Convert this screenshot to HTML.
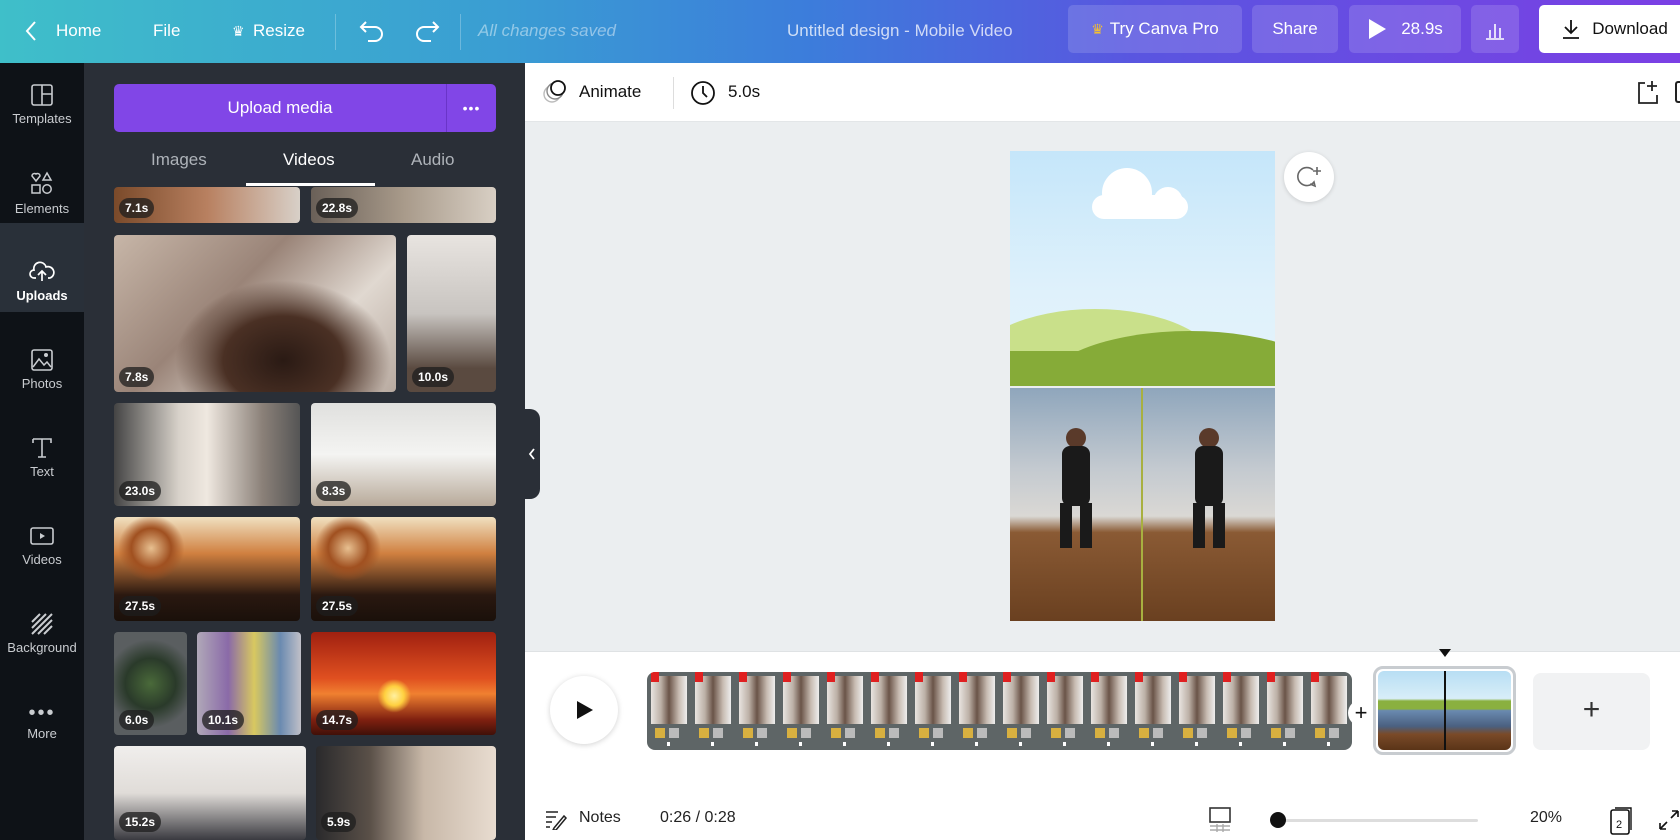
<!DOCTYPE html>
<html><head><meta charset="utf-8"><style>
*{margin:0;padding:0;box-sizing:border-box}
body{width:1680px;height:840px;overflow:hidden;font-family:"Liberation Sans",sans-serif;background:#ebeef0;position:relative}
.a{position:absolute}
#hdr{left:0;top:0;width:1680px;height:63px;background:linear-gradient(90deg,#3fbfc9 0%,#3a9dd3 30%,#3c7ddb 48%,#5a55e0 68%,#7b3fe4 100%);color:#fff;font-size:17px}
#hdr .t{position:absolute;top:20px;line-height:22px}
.hb{position:absolute;top:5px;height:48px;border-radius:5px;background:rgba(255,255,255,.14);color:#fff;font-size:17px;display:flex;align-items:center;justify-content:center}
#side{left:0;top:63px;width:84px;height:777px;background:#0e1217}
.si{position:absolute;left:0;width:84px;text-align:center;color:#c9ccd0;font-size:13px}
.si svg{display:block;margin:0 auto 4px}
#panel{left:84px;top:63px;width:441px;height:777px;background:#2a2f37}
.tile{position:absolute;border-radius:4px;overflow:hidden}
.lab{position:absolute;left:5px;bottom:5px;background:rgba(30,30,30,.75);color:#fff;font-size:12px;font-weight:bold;padding:3px 6px;border-radius:10px}
#tool{left:525px;top:63px;width:1155px;height:59px;background:#fff;border-bottom:1px solid #e3e6e8}
#tl{left:525px;top:651px;width:1155px;height:147px;background:#fff;border-top:1px solid #dfe2e4}
#bb{left:525px;top:798px;width:1155px;height:42px;background:#fff;font-size:16px;color:#222}
</style></head><body>
<div id="hdr" class="a">
<svg class="a" style="left:24px;top:20px" width="14" height="22" viewBox="0 0 14 22"><path d="M11 2 L3 11 L11 20" stroke="#fff" stroke-width="2" fill="none"/></svg>
<span class="t" style="left:56px">Home</span>
<span class="t" style="left:153px">File</span>
<span class="t" style="left:232px;font-size:14px">♛</span>
<span class="t" style="left:253px">Resize</span>
<div class="a" style="left:335px;top:14px;width:1px;height:36px;background:rgba(255,255,255,.25)"></div>
<svg class="a" style="left:358px;top:18px" width="28" height="26" viewBox="0 0 28 26"><path d="M8 4 L3 9 L8 14 M3 9 H17 A7 7 0 0 1 17 23 H10" stroke="#fff" stroke-width="2" fill="none"/></svg>
<svg class="a" style="left:413px;top:18px" width="28" height="26" viewBox="0 0 28 26"><path d="M20 4 L25 9 L20 14 M25 9 H11 A7 7 0 0 0 11 23 H18" stroke="#fff" stroke-width="2" fill="none"/></svg>
<div class="a" style="left:460px;top:14px;width:1px;height:36px;background:rgba(255,255,255,.25)"></div>
<span class="t" style="left:478px;font-style:italic;color:rgba(255,255,255,.45)">All changes saved</span>
<span class="t" style="left:787px;color:rgba(255,255,255,.75)">Untitled design - Mobile Video</span>
<div class="hb" style="left:1068px;width:174px"><span style="color:#f5c030;font-size:14px;margin-right:6px">♛</span>Try Canva Pro</div>
<div class="hb" style="left:1252px;width:86px">Share</div>
<div class="hb" style="left:1349px;width:112px"><svg width="20" height="22" style="margin-right:14px"><path d="M2 1 L19 11 L2 21Z" fill="#fff"/></svg>28.9s</div>
<div class="hb" style="left:1471px;width:48px"><svg width="22" height="22"><path d="M2 21H20M6 20V12M11 20V6M16 20V10" stroke="#fff" stroke-width="1.6"/></svg></div>
<div class="hb" style="left:1539px;width:150px;background:#fff;color:#111"><svg width="22" height="22" style="margin-right:10px"><path d="M11 2V15M5 9L11 15L17 9M3 20H19" stroke="#111" stroke-width="1.8" fill="none"/></svg>Download</div>
</div>

<div id="side" class="a">
<div class="a" style="left:0;top:160px;width:84px;height:89px;background:#293039"></div>
<div class="a" style="left:0;top:0;width:84px;height:160px;background:#0e1217;border-bottom-right-radius:8px"></div>
<div class="a" style="left:0;top:249px;width:84px;height:528px;background:#0e1217;border-top-right-radius:8px"></div>
<div class="si" style="top:20px"><svg width="24" height="24"><rect x="2" y="2" width="20" height="20" rx="2" stroke="#c9ccd0" stroke-width="1.6" fill="none"/><path d="M12 2V22M12 11H22" stroke="#c9ccd0" stroke-width="1.6"/></svg>Templates</div>
<div class="si" style="top:108px"><svg width="24" height="26"><path d="M6 10 L2 5 A2.5 2.5 0 0 1 6 3 A2.5 2.5 0 0 1 10 5Z M17 2 L21 9 H13Z" stroke="#c9ccd0" stroke-width="1.5" fill="none"/><rect x="2" y="14" width="8" height="8" stroke="#c9ccd0" stroke-width="1.5" fill="none"/><circle cx="17" cy="18" r="4.2" stroke="#c9ccd0" stroke-width="1.5" fill="none"/></svg>Elements</div>
<div class="si" style="top:197px;color:#fff;font-weight:bold"><svg width="26" height="24"><path d="M7 18 H5 A4 4 0 0 1 5 10 A6 6 0 0 1 17 7 A5 5 0 0 1 21 18 H19 M13 21V11M9 15L13 11L17 15" stroke="#fff" stroke-width="1.7" fill="none"/></svg>Uploads</div>
<div class="si" style="top:285px"><svg width="24" height="24"><rect x="2" y="2" width="20" height="20" rx="2" stroke="#c9ccd0" stroke-width="1.6" fill="none"/><path d="M3 19L9 11L14 17L17 14L21 19" stroke="#c9ccd0" stroke-width="1.5" fill="none"/><circle cx="16" cy="7" r="2" fill="#c9ccd0"/></svg>Photos</div>
<div class="si" style="top:373px"><svg width="24" height="24"><path d="M3 3H21V7M3 3V7M12 3V21M8 21H16" stroke="#c9ccd0" stroke-width="1.6" fill="none"/></svg>Text</div>
<div class="si" style="top:461px"><svg width="26" height="24"><rect x="2" y="4" width="22" height="16" rx="2" stroke="#c9ccd0" stroke-width="1.6" fill="none"/><path d="M11 9L16 12L11 15Z" fill="#c9ccd0"/></svg>Videos</div>
<div class="si" style="top:549px"><svg width="24" height="24"><path d="M2 10L10 2M2 16L16 2M2 22L22 2M8 22L22 8M14 22L22 14" stroke="#c9ccd0" stroke-width="2"/></svg>Background</div>
<div class="si" style="top:645px"><div style="font-size:20px;line-height:10px;letter-spacing:2px">•••</div><div style="margin-top:8px">More</div></div>
</div>

<div id="panel" class="a">
<div class="a" style="left:30px;top:21px;width:382px;height:48px;background:#8146e7;border-radius:5px;color:#fff;font-size:17px">
<div class="a" style="left:0;top:0;width:332px;height:48px;display:flex;align-items:center;justify-content:center">Upload media</div>
<div class="a" style="left:332px;top:0;width:1px;height:48px;background:#6a34c8"></div>
<div class="a" style="left:333px;top:0;width:49px;height:48px;display:flex;align-items:center;justify-content:center;font-size:14px;letter-spacing:1px">•••</div>
</div>
<div class="a" style="left:67px;top:87px;color:#aeb3b9;font-size:17px">Images</div>
<div class="a" style="left:199px;top:87px;color:#fff;font-size:17px">Videos</div>
<div class="a" style="left:327px;top:87px;color:#aeb3b9;font-size:17px">Audio</div>
<div class="a" style="left:162px;top:120px;width:129px;height:3px;background:#fff"></div>
</div>
<div class="tile" style="left:114px;top:187px;width:186px;height:36px;background:linear-gradient(90deg,#7a4a2a,#b88060,#d8d0c8)"><span class="lab">7.1s</span></div>
<div class="tile" style="left:311px;top:187px;width:185px;height:36px;background:linear-gradient(90deg,#6a6058,#a89a8a,#d8cfc4)"><span class="lab">22.8s</span></div>
<div class="tile" style="left:114px;top:235px;width:282px;height:157px;background:radial-gradient(ellipse at 60% 80%,#2a1a14 0,#4a3024 25%,transparent 45%),linear-gradient(135deg,#c7b6a8,#9a8478 40%,#e0d8d0 70%,#b8aaa0)"><span class="lab">7.8s</span></div>
<div class="tile" style="left:407px;top:235px;width:89px;height:157px;background:linear-gradient(180deg,#e8e4e0,#c8c4c0 50%,#5a4a40 85%)"><span class="lab">10.0s</span></div>
<div class="tile" style="left:114px;top:403px;width:186px;height:103px;background:linear-gradient(90deg,#444,#d8d2ca 35%,#efe8e0 50%,#8a8078 80%,#555)"><span class="lab">23.0s</span></div>
<div class="tile" style="left:311px;top:403px;width:185px;height:103px;background:linear-gradient(180deg,#e0e0de,#f4f4f2 50%,#b8aa9a)"><span class="lab">8.3s</span></div>
<div class="tile" style="left:114px;top:517px;width:186px;height:104px;background:radial-gradient(circle at 20% 30%,#e8c090 0,#a05020 12%,transparent 20%),linear-gradient(180deg,#f0e0c0,#d08040 35%,#2a1810 75%,#1a100a)"><span class="lab">27.5s</span></div>
<div class="tile" style="left:311px;top:517px;width:185px;height:104px;background:radial-gradient(circle at 20% 30%,#e8c090 0,#a05020 12%,transparent 20%),linear-gradient(180deg,#f0e0c0,#d08040 35%,#2a1810 75%,#1a100a)"><span class="lab">27.5s</span></div>
<div class="tile" style="left:114px;top:632px;width:73px;height:103px;background:radial-gradient(circle,#4a6a3a 0,#2a3a2a 40%,#5a5e60 70%)"><span class="lab">6.0s</span></div>
<div class="tile" style="left:197px;top:632px;width:104px;height:103px;background:linear-gradient(90deg,#b0a8b8,#8a6aa8 30%,#d8c860 55%,#6a8ab0 80%,#c0c0c8)"><span class="lab">10.1s</span></div>
<div class="tile" style="left:311px;top:632px;width:185px;height:103px;background:radial-gradient(circle at 45% 62%,#fff0a0 0,#ffd040 8%,transparent 14%),linear-gradient(180deg,#a02010,#e05020 45%,#f08030 60%,#802010 85%,#401008)"><span class="lab">14.7s</span></div>
<div class="tile" style="left:114px;top:746px;width:192px;height:94px;background:linear-gradient(180deg,#f0eeec,#e0dcd8 50%,#3a3a40)"><span class="lab" style="bottom:8px">15.2s</span></div>
<div class="tile" style="left:316px;top:746px;width:180px;height:94px;background:linear-gradient(90deg,#2a2a2c,#5a5048 30%,#c8b8a8 60%,#e8dcd0)"><span class="lab" style="bottom:8px">5.9s</span></div>

<div class="a" style="left:525px;top:409px;width:15px;height:90px;background:#2a2f37;border-radius:0 10px 10px 0"></div>
<svg class="a" style="left:527px;top:447px" width="10" height="14"><path d="M7 2L3 7L7 12" stroke="#fff" stroke-width="1.8" fill="none"/></svg>

<div id="tool" class="a">
<svg class="a" style="left:17px;top:16px" width="26" height="26"><circle cx="10" cy="15" r="8" stroke="#bbb" stroke-width="1.4" fill="none"/><circle cx="13" cy="12" r="8" stroke="#888" stroke-width="1.4" fill="#fff"/><circle cx="16" cy="9" r="7" stroke="#111" stroke-width="1.8" fill="#fff"/></svg>
<div class="a" style="left:54px;top:19px;font-size:17px;color:#111">Animate</div>
<div class="a" style="left:148px;top:14px;width:1px;height:32px;background:#ddd"></div>
<svg class="a" style="left:165px;top:17px" width="26" height="26"><circle cx="13" cy="13" r="11" stroke="#111" stroke-width="1.8" fill="none"/><path d="M13 6V13L17 17" stroke="#111" stroke-width="1.8" fill="none"/></svg>
<div class="a" style="left:203px;top:19px;font-size:17px;color:#111">5.0s</div>
<svg class="a" style="left:1111px;top:16px" width="24" height="26"><path d="M9 4H3V24H21V16M16 2V12M11 7H21" stroke="#222" stroke-width="1.8" fill="none"/></svg>
<div class="a" style="left:1150px;top:18px;width:8px;height:22px;border:2px solid #222;border-right:none;border-radius:3px 0 0 3px"></div>
</div>

<div class="a" style="left:1010px;top:151px;width:265px;height:235px;background:linear-gradient(180deg,#c5e6fa,#dff1fb 60%,#e4f3fb);overflow:hidden">
<div class="a" style="left:92px;top:17px;width:50px;height:50px;border-radius:50%;background:#fff"></div>
<div class="a" style="left:143px;top:36px;width:30px;height:30px;border-radius:50%;background:#fff"></div>
<div class="a" style="left:82px;top:44px;width:96px;height:24px;border-radius:12px;background:#fff"></div>
<div class="a" style="left:-40px;top:158px;width:250px;height:120px;border-radius:50%;background:#c9e08a"></div>
<div class="a" style="left:30px;top:180px;width:300px;height:120px;border-radius:50%;background:#86ab38"></div>
<div class="a" style="left:0;top:200px;width:265px;height:40px;background:#86ab38"></div>
</div>
<div class="a" style="left:1010px;top:388px;width:131px;height:233px;background:linear-gradient(180deg,#8fa6bc,#c4cad0 35%,#dad8d4 55%,#8a5a34 62%,#6a4020 100%)">
<div class="a" style="left:56px;top:40px;width:20px;height:20px;border-radius:50%;background:#5a3a2a"></div>
<div class="a" style="left:52px;top:58px;width:28px;height:60px;background:#1a1a1a;border-radius:8px"></div>
<div class="a" style="left:50px;top:115px;width:12px;height:45px;background:#1a1a1a"></div>
<div class="a" style="left:70px;top:115px;width:12px;height:45px;background:#1a1a1a"></div>
</div>
<div class="a" style="left:1141px;top:388px;width:2px;height:233px;background:#a8b040"></div>
<div class="a" style="left:1143px;top:388px;width:132px;height:233px;background:linear-gradient(180deg,#8fa6bc,#c4cad0 35%,#dad8d4 55%,#8a5a34 62%,#6a4020 100%)">
<div class="a" style="left:56px;top:40px;width:20px;height:20px;border-radius:50%;background:#5a3a2a"></div>
<div class="a" style="left:52px;top:58px;width:28px;height:60px;background:#1a1a1a;border-radius:8px"></div>
<div class="a" style="left:50px;top:115px;width:12px;height:45px;background:#1a1a1a"></div>
<div class="a" style="left:70px;top:115px;width:12px;height:45px;background:#1a1a1a"></div>
</div>
<div class="a" style="left:1284px;top:152px;width:50px;height:50px;border-radius:50%;background:#fff;box-shadow:0 1px 4px rgba(0,0,0,.15)"></div>
<svg class="a" style="left:1296px;top:164px" width="28" height="28"><path d="M17 6A9 9 0 1 0 18 18L19 22L14 20" stroke="#666" stroke-width="1.6" fill="none"/><path d="M21 3V11M17 7H25" stroke="#666" stroke-width="1.6"/></svg>

<div id="tl" class="a"></div>
<div class="a" style="left:550px;top:676px;width:68px;height:68px;border-radius:50%;background:#fff;box-shadow:0 1px 6px rgba(0,0,0,.18)"></div>
<svg class="a" style="left:576px;top:700px" width="18" height="20"><path d="M1 1L17 10L1 19Z" fill="#111"/></svg>
<div class="a" style="left:647px;top:672px;width:705px;height:78px;background:#5e6566;border-radius:8px;overflow:hidden">
<div class="a" style="left:4px;top:4px;width:700px;height:48px;background:repeating-linear-gradient(90deg,#e8e4e0 0,#bcb0a6 10px,#6a5448 18px,#c8bcb2 28px,#eee 36px,#5e6566 36px,#5e6566 44px)"></div>
<div class="a" style="left:4px;top:0;width:700px;height:10px;background:repeating-linear-gradient(90deg,#e02020 0,#e02020 8px,transparent 8px,transparent 44px)"></div>
<div class="a" style="left:8px;top:56px;width:700px;height:10px;background:repeating-linear-gradient(90deg,#d8b040 0,#d8b040 10px,transparent 10px,transparent 14px,#bbb 14px,#bbb 24px,transparent 24px,transparent 44px)"></div>
<div class="a" style="left:20px;top:70px;width:700px;height:4px;background:repeating-linear-gradient(90deg,#fff 0,#fff 3px,transparent 3px,transparent 44px)"></div>
</div>
<div class="a" style="left:1348px;top:700px;width:26px;height:26px;border-radius:50%;background:#fff;font-size:22px;text-align:center;line-height:26px;color:#111">+</div>
<div class="a" style="left:1373px;top:666px;width:143px;height:89px;border:3px solid #c8ccd0;border-radius:10px;background:#fff"></div>
<div class="a" style="left:1378px;top:671px;width:133px;height:79px;border-radius:6px;overflow:hidden;background:linear-gradient(180deg,#b8def4 0,#d8eef8 35%,#8ab040 38%,#8ab040 48%,#6a8ab0 50%,#4a6080 70%,#7a4a28 80%,#5a3418 100%)"></div>
<div class="a" style="left:1444px;top:671px;width:2px;height:79px;background:#111"></div>
<svg class="a" style="left:1438px;top:647px" width="14" height="12"><path d="M1 2H13L7 10Z" fill="#111"/></svg>
<div class="a" style="left:1533px;top:673px;width:117px;height:77px;background:#f1f2f3;border-radius:8px;font-size:30px;color:#333;text-align:center;line-height:74px;font-weight:300">+</div>

<div id="bb" class="a">
<svg class="a" style="left:19px;top:10px" width="24" height="22"><path d="M2 4H14M2 9H12M2 14H8M2 19H6M10 20L20 8L22 10L12 22L9 22Z" stroke="#222" stroke-width="1.5" fill="none"/></svg>
<div class="a" style="left:54px;top:11px">Notes</div>
<div class="a" style="left:135px;top:11px">0:26 / 0:28</div>
<svg class="a" style="left:683px;top:8px" width="24" height="26"><rect x="2" y="2" width="20" height="14" stroke="#333" stroke-width="1.6" fill="none"/><path d="M2 20H22M2 24H22M9 18V26M15 18V26" stroke="#aaa" stroke-width="1.4"/></svg>
<div class="a" style="left:752px;top:21px;width:201px;height:3px;background:#ddd;border-radius:2px"></div>
<div class="a" style="left:745px;top:14px;width:16px;height:16px;border-radius:50%;background:#111"></div>
<div class="a" style="left:1005px;top:11px">20%</div>
<svg class="a" style="left:1082px;top:6px" width="28" height="32"><rect x="4" y="6" width="18" height="24" rx="2" stroke="#111" stroke-width="1.6" fill="#fff"/><path d="M8 4H24V26" stroke="#111" stroke-width="1.4" fill="none"/><text x="9" y="24" font-size="11" font-family="Liberation Sans" fill="#111">2</text></svg>
<svg class="a" style="left:1132px;top:10px" width="24" height="24"><path d="M3 21L10 14M3 21V15M3 21H9M21 3L14 10M21 3V9M21 3H15" stroke="#111" stroke-width="1.6" fill="none"/></svg>
</div>
</body></html>
